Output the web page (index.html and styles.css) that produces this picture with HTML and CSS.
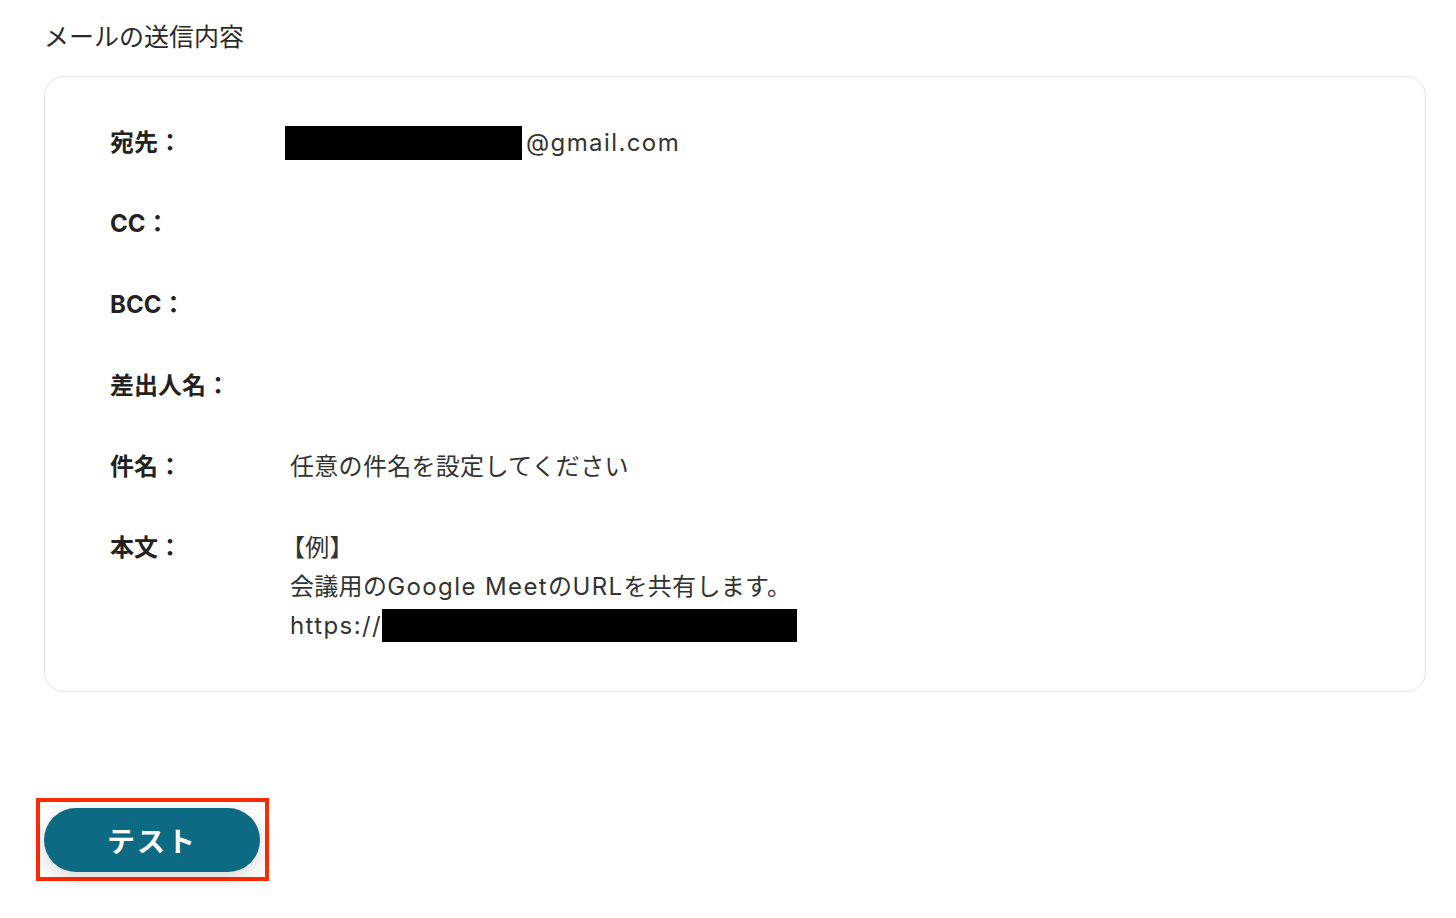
FILE: index.html
```html
<!DOCTYPE html>
<html lang="ja">
<head>
    <meta charset="UTF-8">
    <meta name="viewport" content="width=device-width, initial-scale=1.0">
    <title>メールの送信内容</title>
    <link rel="stylesheet" href="styles.css">
</head>
<body>

    <h2 class="title">メールの送信内容</h2>

    <!-- Mail card -->
    <div class="card">
        <div class="row">
            <div class="label">宛先：</div>
            <div class="value"><span class="mask mask-mail"></span><span class="en">@gmail.com</span></div>
        </div>
        <div class="row">
            <div class="label">CC：</div>
            <div class="value"></div>
        </div>
        <div class="row">
            <div class="label">BCC：</div>
            <div class="value"></div>
        </div>
        <div class="row">
            <div class="label">差出人名：</div>
            <div class="value"></div>
        </div>
        <div class="row">
            <div class="label">件名：</div>
            <div class="value text">任意の件名を設定してください</div>
        </div>
        <div class="row">
            <div class="label">本文：</div>
            <div class="value text">
                <div class="line example">【例】</div>
                <div class="line">会議用の<span class="en">Google Meet</span>の<span class="en">URL</span>を共有します。</div>
                <div class="line"><span class="en">https://</span><span class="mask mask-url"></span></div>
            </div>
        </div>
    </div>

    <!-- Test button, marked with a red frame -->
    <div class="highlight">
        <button class="test-btn">テスト</button>
    </div>

</body>
</html>
```

FILE: styles.css
```css
body {
    margin: 0;
    padding: 0 30px 20px 44px;
    font-family: Inter, "Noto Sans CJK JP", sans-serif;
    color: #333;
    background: #fff;
}

.title {
    font-size: 25px;
    font-weight: 400;
    line-height: 34px;
    margin: 20px 0 22px;
    color: #2a2a2a;
}

.card {
    border: 1px solid #e3e3e3;
    border-radius: 20px;
    padding: 46px 65px 46px;
    display: flex;
    flex-direction: column;
    gap: 42px;
}

.row {
    display: flex;
    font-size: 24px;
    line-height: 39px;
    min-height: 39px;
}

.label {
    width: 175px;
    flex-shrink: 0;
    font-weight: 700;
    color: #222;
}

.value {
    display: flex;
    align-items: center;
    height: 39px;
    letter-spacing: 0.3px;
}

.value.text {
    display: block;
    height: auto;
    padding-left: 5px;
}

.line {
    height: 39px;
}

.en {
    letter-spacing: 1.4px;
}

.example {
    margin-left: -9px;
}

.mask {
    display: inline-block;
    background: #000;
    vertical-align: middle;
}
.mask-mail {
    width: 237px;
    height: 34px;
    margin-right: 4px;
}
.mask-url {
    width: 415px;
    height: 33px;
    vertical-align: -8px;
}

.highlight {
    display: inline-block;
    margin: 106px 0 0 -8px;
    padding: 6px 5px 5px 4px;
    border: 4px solid #ff2a00;
}

.test-btn {
    display: block;
    width: 216px;
    height: 64px;
    border: none;
    border-radius: 32px;
    background-color: #0c6b83;
    color: #fff;
    font-family: Inter, "Noto Sans CJK JP", sans-serif;
    font-size: 28px;
    font-weight: 700;
    letter-spacing: 2px;
    box-shadow: 0 6px 18px rgba(0, 0, 0, 0.16);
    cursor: pointer;
}
```
